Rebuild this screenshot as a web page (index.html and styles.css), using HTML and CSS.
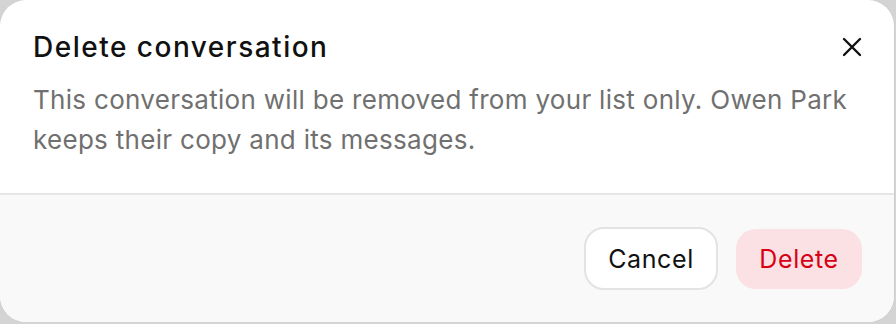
FILE: index.html
```html
<!DOCTYPE html>
<html>
<head>
<meta charset="utf-8">
<link rel="stylesheet" href="styles.css">
</head>
<body>
<div class="dialog">
  <div class="body">
    <div class="head">
      <h2 class="title">Delete conversation</h2>
      <button class="close" aria-label="Close">
        <svg width="20" height="20" viewBox="0 0 20 20"><path d="M2 2 L18 18 M18 2 L2 18" stroke="#111" stroke-width="2.4" stroke-linecap="round"/></svg>
      </button>
    </div>
    <p class="desc">This conversation will be removed from your list only. Owen Park keeps their copy and its messages.</p>
  </div>
  <div class="foot">
    <button class="btn cancel">Cancel</button>
    <button class="btn danger">Delete</button>
  </div>
</div>
</body>
</html>
```
FILE: styles.css
```css
html, body {
  margin: 0;
  padding: 0;
  background: #d4d4d4;
  font-family: Inter, "Noto Sans", sans-serif;
}
.dialog {
  width: 894px;
  height: 322px;
  background: #fff;
  border-radius: 26px;
  overflow: hidden;
  display: flex;
  flex-direction: column;
  box-shadow: 0 0 0 1px #cfcfcf;
}
.body {
  padding: 29px 33px 0 33px;
  height: 164px;
}
.head {
  display: flex;
  justify-content: space-between;
  align-items: center;
}
.title {
  margin: 0;
  font-size: 28px;
  font-weight: 500;
  color: #111;
  line-height: 36px;
  letter-spacing: 1.5px;
}
.close {
  border: 0;
  background: none;
  padding: 0;
  margin-right: -1px;
  width: 20px;
  height: 20px;
  display: flex;
}
.desc {
  margin: 15px 0 0;
  font-size: 26px;
  line-height: 40px;
  letter-spacing: 0.3px;
  color: #707070;
}
.foot {
  flex: 1;
  background: #f9f9f9;
  border-top: 2px solid #e6e6e6;
  display: flex;
  justify-content: flex-end;
  align-items: center;
  gap: 18px;
  padding: 0 32px 0 0;
}
.btn {
  font-family: inherit;
  font-size: 25px;
  font-weight: 400;
  letter-spacing: 0.6px;
  border-radius: 20px;
  cursor: pointer;
}
.cancel {
  width: 134px;
  height: 63px;
  background: #fff;
  border: 2px solid #e3e3e3;
  color: #111;
}
.danger {
  width: 126px;
  height: 60px;
  background: #fbe1e3;
  border: 0;
  color: #d70015;
}
```
